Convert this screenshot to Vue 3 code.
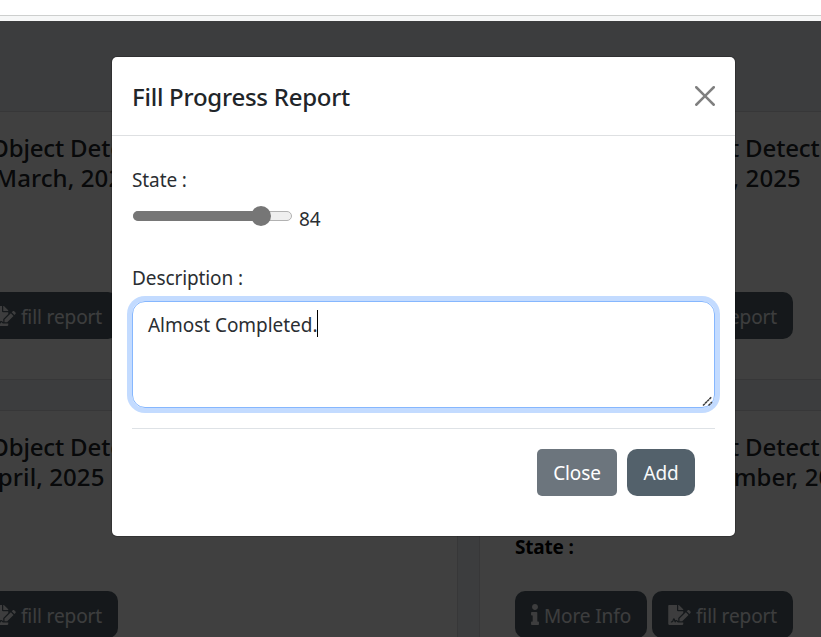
<script setup>
const rows = [
  {
    key: 'first',
    cards: [
      { title: 'Object Detection', titleStart: 150, date: 'March, 2025', dateStart: 155, state: '' },
      { title: 'Object Detection', titleStart: 150, date: 'July, 2025', dateStart: 177, state: '' }
    ]
  },
  {
    key: 'second',
    cards: [
      { title: 'Object Detection', titleStart: 150, date: 'April, 2025', dateStart: 142, state: '' },
      { title: 'Object Detection', titleStart: 150, date: 'November, 2025', dateStart: 159, state: 'State :' }
    ]
  }
]
const progress = 84
</script>

<template>
  <div class="screen">
    <div class="chrome"></div>
    <main class="page">
      <section v-for="row in rows" :key="row.key" class="row">
        <article v-for="(card, i) in row.cards" :key="i" class="card">
          <h5 class="card-title">
            <span :style="{ marginLeft: card.titleStart + 'px' }">{{ card.title }}</span>
            <span class="card-date" :style="{ marginLeft: card.dateStart + 'px' }">{{ card.date }}</span>
          </h5>
          <p class="card-state">{{ card.state }}</p>
          <div class="card-actions">
            <button class="btn btn-info">
              <svg class="icon-info" viewBox="0 0 192 512"><path fill="currentColor" d="M20 424.229h20V279.771H20c-11.046 0-20-8.954-20-20V212c0-11.046 8.954-20 20-20h112c11.046 0 20 8.954 20 20v212.229h20c11.046 0 20 8.954 20 20V492c0 11.046-8.954 20-20 20H20c-11.046 0-20-8.954-20-20v-47.771c0-11.046 8.954-20 20-20zM96 0C56.235 0 24 32.235 24 72s32.235 72 72 72 72-32.235 72-72S135.764 0 96 0z" /></svg>
              <span>More Info</span>
            </button>
            <button class="btn btn-fill">
              <svg class="icon-file" viewBox="0 0 576 512"><path fill="currentColor" d="M218.17 424.14c-2.95-5.92-8.09-6.52-10.17-6.52s-7.22.59-10.02 6.19l-7.67 15.34c-6.37 12.78-25.03 11.37-29.48-2.09L144 386.59l-10.61 31.88c-5.89 17.66-22.38 29.53-41 29.53H80c-8.84 0-16-7.16-16-16s7.16-16 16-16h12.39c4.83 0 9.11-3.08 10.64-7.66l18.19-54.64c3.3-9.81 12.44-16.41 22.78-16.41s19.48 6.59 22.77 16.41l13.88 41.64c19.75-16.19 54.06-9.7 66 14.16 1.89 3.78 5.49 5.95 9.36 6.26v-82.12l128-127.09V160H248c-13.2 0-24-10.8-24-24V0H24C10.7 0 0 10.7 0 24v464c0 13.3 10.7 24 24 24h336c13.3 0 24-10.7 24-24v-40l-128-.11c-16.12-.31-30.58-9.28-37.83-23.75zM384 121.9c0-6.3-2.5-12.4-7-16.9L279.1 7c-4.5-4.5-10.6-7-17-7H256v128h128v-6.1zm-96 225.06V416h68.99l161.68-162.78-67.88-67.88L288 346.96zm280.54-179.63l-31.87-31.87c-9.94-9.94-26.07-9.94-36.01 0l-27.25 27.25 67.88 67.88 27.25-27.25c9.95-9.94 9.95-26.07 0-36.01z" /></svg>
              <span>fill report</span>
            </button>
          </div>
        </article>
      </section>
    </main>

    <div class="backdrop">
      <div class="modal">
        <header class="modal-header">
          <h5 class="modal-title">Fill Progress Report</h5>
          <button class="close" aria-label="Close">
            <svg viewBox="0 0 16 16"><path d="M.293.293a1 1 0 0 1 1.414 0L8 6.586 14.293.293a1 1 0 1 1 1.414 1.414L9.414 8l6.293 6.293a1 1 0 0 1-1.414 1.414L8 9.414l-6.293 6.293a1 1 0 0 1-1.414-1.414L6.586 8 .293 1.707a1 1 0 0 1 0-1.414z" /></svg>
          </button>
        </header>
        <div class="modal-body">
          <div class="label state-label"><span>State :</span></div>
          <div class="range-row">
            <div class="range">
              <div class="range-fill" :style="{ width: progress + '%' }"></div>
              <div class="range-thumb"></div>
            </div>
            <span class="range-value">{{ progress }}</span>
          </div>
          <div class="label desc-label"><span>Description :</span></div>
          <div class="textarea">
            <span class="typed">Almost Completed.</span><i class="caret"></i>
            <svg class="grip" viewBox="0 0 11 11"><path d="M1 9.5L9.5 1M6.5 9.5L10 6" /></svg>
          </div>
          <footer class="modal-footer">
            <button class="btn btn-close"><span>Close</span></button>
            <button class="btn btn-add"><span>Add</span></button>
          </footer>
        </div>
      </div>
    </div>
  </div>
</template>

<style>
body {
  overflow: hidden;
}
</style>

<style scoped>
* {
  box-sizing: border-box;
}
.screen {
  position: relative;
  width: 821px;
  height: 637px;
  overflow: hidden;
  background: #fff;
  font-family: "Noto Sans", "Open Sans", sans-serif;
  font-size: 19px;
  line-height: 30px;
  letter-spacing: -0.1px;
  color: #2a2e32;
}
.chrome {
  height: 21px;
  background: linear-gradient(#fff 0 15px, #cdcfce 15px 16px, #f6f7f7 16px 21px);
}
.page {
  height: 616px;
  overflow: hidden;
  padding-top: 90px;
  background: #f0f3f8;
  display: flex;
  flex-direction: column;
  gap: 30px;
}
.row {
  display: flex;
  gap: 21px;
  flex: none;
  margin-left: -196px;
  width: 1329px;
}
.card {
  width: 654px;
  height: 269px;
  flex: none;
  padding: 21px 35px;
  border: 1px solid #d9dcdf;
  background: #fff;
  color: #000;
}
.card-title {
  margin: 0;
  display: flex;
  flex-direction: column;
  font-size: 24px;
  font-weight: 550;
  line-height: 30px;
  letter-spacing: -0.15px;
  white-space: nowrap;
  color: #202428;
}
.card-date {
  letter-spacing: 0.1px;
}
.card-state {
  margin: 40px 0 28px;
  height: 31px;
  line-height: 31px;
  font-weight: 700;
  letter-spacing: -0.2px;
}
.card-actions {
  display: flex;
  gap: 5px;
}
.btn {
  height: 47px;
  display: flex;
  align-items: center;
  justify-content: center;
  border: 0;
  padding: 0;
  border-radius: 10px;
  background: #53616b;
  color: #f8f9fa;
  font: inherit;
  letter-spacing: inherit;
  white-space: nowrap;
}
.btn span {
  padding-top: 1px;
}
.card .btn span {
  padding-top: 2px;
}
.btn-info {
  width: 132px;
  gap: 5px;
}
.btn-fill {
  width: 141px;
  gap: 5px;
}
.card .btn {
  color: #f1f3f5;
}
.icon-info {
  width: 8px;
  height: 21px;
}
.icon-file {
  width: 23px;
  height: 20px;
}
.backdrop {
  position: absolute;
  inset: 21px 0 0;
  padding: 36px 0 0 112px;
  background: rgba(0, 0, 0, 0.75);
}
.modal {
  width: 623px;
  height: 479px;
  border-radius: 5px;
  background: #fff;
  box-shadow: 0 0 0 1px rgba(0, 0, 0, 0.2);
}
.modal-header {
  height: 79px;
  padding: 0 20px;
  display: flex;
  align-items: center;
  justify-content: space-between;
  border-bottom: 1px solid #dee0e2;
}
.modal-title {
  margin: 0;
  font-size: 24px;
  font-weight: 550;
  letter-spacing: -0.25px;
  padding-top: 2px;
  color: #212529;
}
.close {
  width: 20px;
  height: 20px;
  padding: 0;
  border: 0;
  background: none;
  display: flex;
}
.close svg {
  width: 20px;
  height: 20px;
  fill: #7f7f7f;
}
.modal-body {
  padding: 29px 20px 0;
}
.label {
  height: 30px;
}
.range-row {
  height: 30px;
  margin-top: 9px;
  padding-left: 1px;
  display: flex;
  gap: 7px;
}
.range {
  position: relative;
  width: 159px;
  height: 10px;
  margin-top: 7px;
  border: 1px solid #b2b2b2;
  border-radius: 5px;
  background: #efefef;
}
.range-fill {
  height: 10px;
  margin: -1px;
  border-radius: 5px 0 0 5px;
  background: #767676;
}
.range-thumb {
  position: absolute;
  left: 117px;
  top: -6px;
  width: 20px;
  height: 20px;
  border-radius: 50%;
  background: #767676;
}
.desc-label {
  margin-top: 29px;
}
.textarea {
  position: relative;
  height: 107px;
  margin-top: 8px;
  padding: 8px 15px;
  border: 1px solid #86b7fe;
  border-radius: 13px;
  box-shadow: 0 0 0 5px #c3dbff;
  display: flex;
}
.typed {
  letter-spacing: -0.04px;
}
.caret {
  width: 1px;
  height: 27px;
  background: #000;
}
.grip {
  position: absolute;
  right: 1px;
  bottom: 0;
  width: 11px;
  height: 11px;
  fill: none;
  stroke: #3c3c3c;
  stroke-width: 1.5;
  stroke-dasharray: 2.6 0.4;
}
.modal-footer {
  margin-top: 20px;
  padding: 20px 20px 0;
  border-top: 1px solid #dee2e6;
  display: flex;
  justify-content: flex-end;
  gap: 10px;
}
.btn-close {
  width: 80px;
  border-radius: 5px;
  background: #6c757d;
  color: #fff;
}
.btn-add {
  width: 68px;
}
</style>
